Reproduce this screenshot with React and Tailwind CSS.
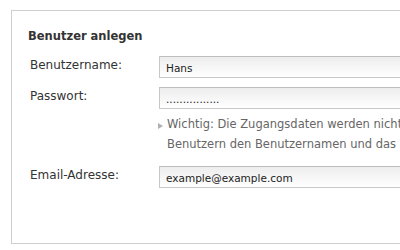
import React from 'react';

const font = { fontFamily: '"DejaVu Sans", Verdana, sans-serif' };

function Field({ label, value }) {
  return (
    <div className="flex items-start pl-[2px]">
      <div className="w-[129px] shrink-0 text-[12px] leading-[19px] text-[#333]">{label}</div>
      <div className="h-[22px] w-[280px] shrink-0 border border-[#c8c8c8] border-t-[#bdbdbd] bg-linear-to-b from-[#ededed] to-white pl-[6px] pt-[4px] text-[10.5px] leading-[15px] text-[#222]">
        {value}
      </div>
    </div>
  );
}

export default function App() {
  return (
    <div className="w-[400px] h-[250px] overflow-hidden bg-white" style={font}>
      <div className="ml-[11px] mt-[10px] w-[430px] h-[234px] border border-[#cfcfcf] pl-[16px] pt-[18px]">
        <h2 className="text-[11.5px] leading-[14px] font-bold text-[#333] mb-[13px]">Benutzer anlegen</h2>

        <Field label="Benutzername:" value="Hans" />
        <div className="h-[9px]" />
        <Field label="Passwort:" value="................" />

        {/* Hinweis */}
        <div className="flex items-start ml-[130px] mt-[5px] whitespace-nowrap">
          <svg width="5" height="6" viewBox="0 0 5 6" className="mt-[9px] mr-[4px] shrink-0">
            <path d="M0 0 L5 3 L0 6 Z" fill="#b0b0b0" />
          </svg>
          <p className="text-[11.5px] leading-[20px] text-[#666]">
            Wichtig: Die Zugangsdaten werden nicht per E-Mail verschickt. Teilen Sie den
            <br />
            Benutzern den Benutzernamen und das Passwort bitte selbst mit.
          </p>
        </div>

        <div className="h-[12px]" />
        <Field label="Email-Adresse:" value="example@example.com" />
      </div>
    </div>
  );
}
